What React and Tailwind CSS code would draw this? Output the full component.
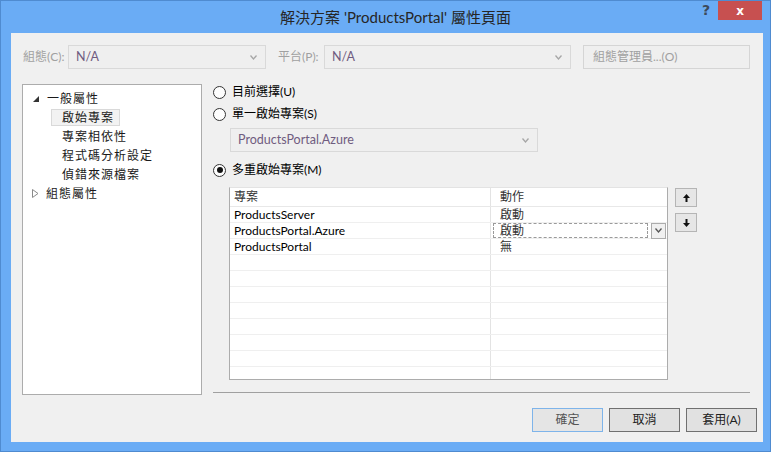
import React from "react";

const Chevron = ({ color = "#a6a6a6" }) => (
  <svg width="7" height="5" viewBox="0 0 7 5">
    <path d="M0.5 0.5 L3.5 4 L6.5 0.5" fill="none" stroke={color} strokeWidth="1.3" />
  </svg>
);

const Radio = ({ checked }) => (
  <div className="w-[13px] h-[13px] rounded-full border border-[#333333] bg-[#fdfdfd] flex items-center justify-center shrink-0">
    {checked && <div className="w-[6px] h-[6px] rounded-full bg-[#111111]" />}
  </div>
);

const Combo = ({ text, className }) => (
  <div className={"h-[24px] border border-[#d9d9d9] bg-[#efefef] flex items-center justify-between pl-[7px] pr-[8px] " + className}>
    <span className="text-[#6f5c80] text-[12.5px]">{text}</span>
    <Chevron />
  </div>
);

const ArrowBtn = ({ up }) => (
  <div className="w-[22px] h-[19px] border border-[#b5b5b5] bg-[#e6e6e6] flex items-center justify-center">
    <svg width="7" height="8" viewBox="0 0 7 8">
      {up ? (
        <path d="M3.5 0 L7 4 L4.5 4 L4.5 8 L2.5 8 L2.5 4 L0 4 Z" fill="#111" />
      ) : (
        <path d="M3.5 8 L7 4 L4.5 4 L4.5 0 L2.5 0 L2.5 4 L0 4 Z" fill="#111" />
      )}
    </svg>
  </div>
);

const rows = [
  ["ProductsServer", "啟動"],
  ["ProductsPortal.Azure", "啟動", true],
  ["ProductsPortal", "無"],
  ["", ""], ["", ""], ["", ""], ["", ""], ["", ""], ["", ""], ["", ""], ["", ""], ["", ""],
];

export default function App() {
  return (
    <div className="w-[771px] h-[452px] bg-[#6aacf5] border border-[#4f8bd0] flex flex-col overflow-hidden font-['Segoe_UI','Lato','Noto_Sans_CJK_TC',sans-serif] text-[12px] text-[#000]">
      {/* Title bar */}
      <div className="h-[32px] flex shrink-0">
        <div className="flex-1 flex justify-center pl-[91px] pt-[6px] text-[15px] text-[#262626] leading-[20px]">
          解決方案 'ProductsPortal' 屬性頁面
        </div>
        <div className="w-[14px] h-[20px] flex items-center justify-center text-[#3d4a5a] font-bold text-[14px] font-['DejaVu_Sans',sans-serif] leading-none pb-[2px]">
          ?
        </div>
        <div className="ml-[5px] w-[44px] h-[19px] mt-0 bg-[#c75050] flex items-center justify-center text-white font-bold text-[12px] font-['DejaVu_Sans',sans-serif] mr-[8px]">
          x
        </div>
      </div>

      {/* Content */}
      <div className="ml-[10px] w-[752px] h-[409px] bg-[#f0f0f0] flex flex-col">
        {/* Top row */}
        <div className="mt-[12px] h-[24px] flex items-center pl-[12px]">
          <div className="w-[45px] text-[#a0a0a0]">組態(C):</div>
          <Combo text="N/A" className="w-[198px]" />
          <div className="ml-[12px] w-[46px] text-[#a0a0a0]">平台(P):</div>
          <Combo text="N/A" className="w-[247px]" />
          <div className="ml-[12px] w-[167px] h-[24px] border border-[#d5d5d5] bg-[#efefef] text-[#a0a0a0] flex items-center pl-[9px]">
            組態管理員...(O)
          </div>
        </div>

        {/* Middle */}
        <div className="mt-[15px] flex">
          {/* Tree */}
          <div className="ml-[11px] w-[180px] h-[311px] border border-[#acacac] bg-white pt-[5px] text-[#1a1a1a]">
            <div className="h-[18px] flex items-center">
              <div className="ml-[10px] w-[14px] flex items-center">
                <svg width="6" height="6" viewBox="0 0 6 6"><path d="M6 0 L6 6 L0 6 Z" fill="#333" /></svg>
              </div>
              <span className="tracking-[1px]">一般屬性</span>
            </div>
            <div className="h-[19px] flex items-center">
              <div className="ml-[28px] h-[17px] w-[69px] border border-[#d9d9d9] bg-[#f2f2f2] flex items-center pl-[10px] tracking-[1px]">
                啟始專案
              </div>
            </div>
            {["專案相依性", "程式碼分析設定", "偵錯來源檔案"].map((t) => (
              <div key={t} className="h-[19px] flex items-center pl-[39px] tracking-[1px]">{t}</div>
            ))}
            <div className="h-[19px] flex items-center">
              <div className="ml-[9px] w-[14px] flex items-center">
                <svg width="7" height="9" viewBox="0 0 7 9"><path d="M0.5 0.5 L6 4.5 L0.5 8.5 Z" fill="none" stroke="#8a8a8a" strokeWidth="1" /></svg>
              </div>
              <span className="tracking-[1px]">組態屬性</span>
            </div>
          </div>

          {/* Right column */}
          <div className="ml-[11px] flex flex-col">
            <div className="h-[16px] flex items-center gap-[6px]">
              <Radio />
              <span>目前選擇(U)</span>
            </div>
            <div className="mt-[6px] h-[16px] flex items-center gap-[6px]">
              <Radio />
              <span>單一啟始專案(S)</span>
            </div>
            <Combo text="ProductsPortal.Azure" className="mt-[6px] ml-[17px] w-[308px]" />
            <div className="mt-[10px] h-[16px] flex items-center gap-[6px]">
              <Radio checked />
              <span>多重啟始專案(M)</span>
            </div>

            <div className="mt-[9px] flex">
              {/* Grid */}
              <div className="ml-[16px] w-[439px] h-[193px] border border-[#acacac] border-t-[#e3e3e3] bg-white overflow-hidden flex flex-col">
                <div className="h-[19px] shrink-0 flex border-b border-[#e8e8e8] text-[#333]">
                  <div className="w-[261px] border-r border-[#e3e3e3] flex items-center pl-[4px]">專案</div>
                  <div className="flex-1 flex items-center pl-[9px]">動作</div>
                </div>
                {rows.map(([a, b, sel], i) => (
                  <div key={i} className="h-[16px] shrink-0 flex border-b border-[#efefef]">
                    <div className="w-[261px] border-r border-[#e3e3e3] flex items-center pl-[4px]">{a}</div>
                    {sel ? (
                      <div className="flex-1 flex items-center">
                        <div className="ml-[2px] w-[155px] h-[15px] border border-dashed border-[#9a9a9a] flex items-center pl-[6px] text-[#333]">{b}</div>
                        <div className="ml-[3px] w-[15px] h-[16px] border border-[#acacac] bg-[#f0f0f0] flex items-center justify-center">
                          <Chevron color="#555" />
                        </div>
                      </div>
                    ) : (
                      <div className="flex-1 flex items-center pl-[9px] text-[#333]">{b}</div>
                    )}
                  </div>
                ))}
              </div>
              {/* Up/down */}
              <div className="ml-[7px] flex flex-col pt-[1px] gap-[6px]">
                <ArrowBtn up />
                <ArrowBtn />
              </div>
            </div>

            <div className="mt-[12px] w-[537px] h-px bg-[#a0a0a0]" />
          </div>
        </div>

        {/* Bottom buttons */}
        <div className="mt-[13px] flex justify-end gap-[6px] pr-[6px]">
          <div className="w-[71px] h-[24px] border border-[#7eb4ea] bg-[#e5e5e5] flex items-center justify-center text-[#555]">確定</div>
          <div className="w-[71px] h-[24px] border border-[#707070] bg-[#e1e1e1] flex items-center justify-center text-[#222]">取消</div>
          <div className="w-[71px] h-[24px] border border-[#707070] bg-[#e1e1e1] flex items-center justify-center text-[#222]">套用(A)</div>
        </div>
      </div>
    </div>
  );
}
